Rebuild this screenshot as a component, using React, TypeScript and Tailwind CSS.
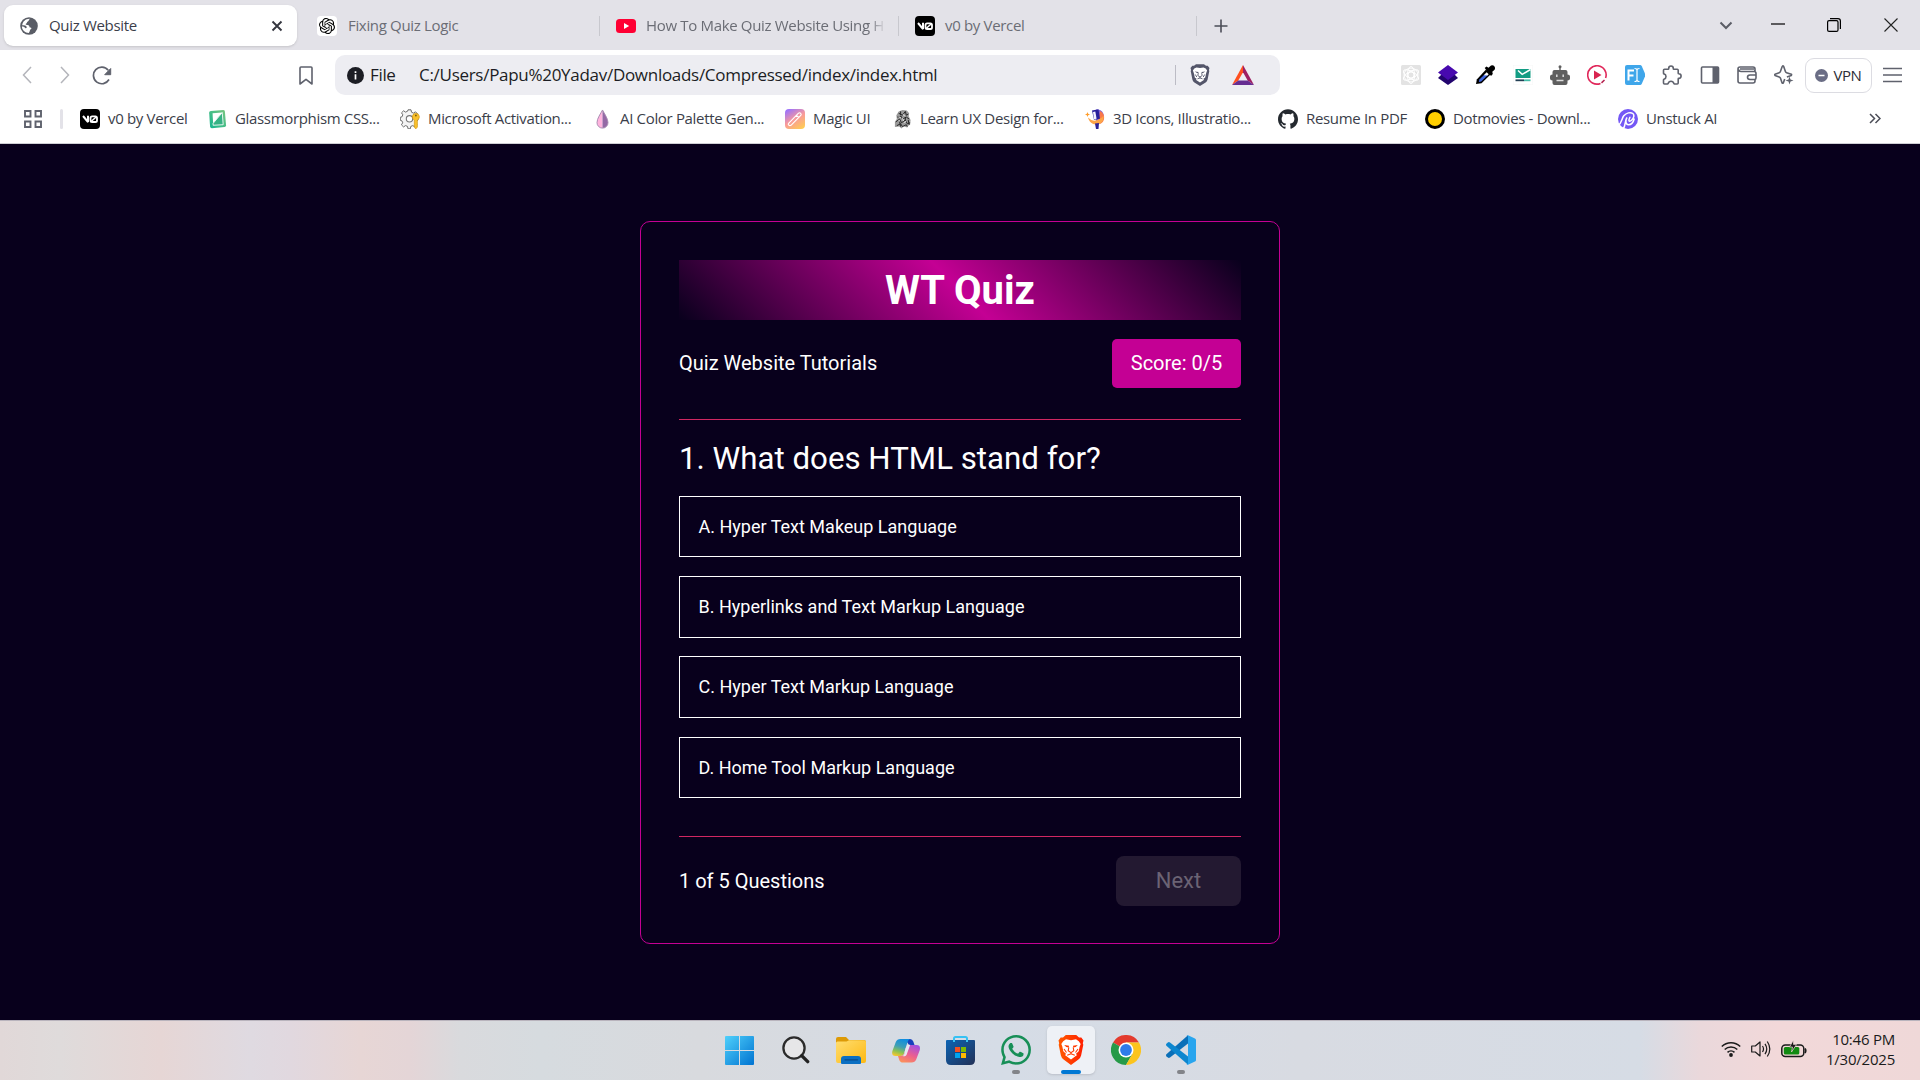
import React from "react";
import { SiOpenai, SiWhatsapp, SiGithub } from "react-icons/si";

const Globe = () => (
  <svg viewBox="0 0 18 18" className="h-[18px] w-[18px] shrink-0">
    <circle cx="9" cy="9" r="8.8" fill="#5a5d66" />
    <path d="M9.8 1.8c-1.3 1.4-.6 2-2 2.6-1.3.5-.3 1.6-1.7 2.2-.9.4-.2 1.6 1 1.5 2-.2 2.300 1 2.400 1.900.1.800 1.900.3 1.900 1.300 0 1.200-1.300.9-1.500 2.200-.2 1-.5 1.700-1.100 2.500C5 16 1.900 13 1.900 9.600c1.300 0 2.400.5 3.300 1.300.6.6 1.500.2 1.500-.5 0-1-.6-1.500-1.700-1.800-1-.3-2-.4-2.800-.3C2.600 4.600 5.800 1.600 9.800 1.800Z" fill="#fff" />
    <path d="M12.500 3.200c2 1 3.400 3.300 3.500 5.300-1.400.4-2.700-.1-3.200-1.200-.4-1 .6-1.300.2-2.200-.3-.6-1-.9-.5-1.900Z" fill="#5a5d66" />
  </svg>
);

const V0 = () => (
  <svg viewBox="0 0 20 20" className="h-5 w-5 shrink-0">
    <rect width="20" height="20" rx="4" fill="#000" />
    <path d="M3 7 8 13 V6.800" fill="none" stroke="#fff" strokeWidth="2" strokeLinejoin="bevel" />
    <rect x="10.500" y="7.400" width="6.500" height="5.600" rx="1.600" fill="none" stroke="#fff" strokeWidth="1.800" />
    <path d="m10.800 12.800 5.600-5" stroke="#fff" strokeWidth="1.500" />
  </svg>
);

const YouTube = () => (
  <svg viewBox="0 0 20 14" className="h-[14px] w-5 shrink-0">
    <rect width="20" height="14" rx="3.500" fill="#ff0033" />
    <path d="M8 4v6l5.200-3Z" fill="#fff" />
  </svg>
);

const Glass = () => (
  <svg viewBox="0 0 20 20" className="h-5 w-[19px] shrink-0">
    <defs>
      <linearGradient id="glass" x1="1" y1="0" x2="0" y2="1">
        <stop offset="0" stopColor="#7cc67f" />
        <stop offset="1" stopColor="#12b590" />
      </linearGradient>
    </defs>
    <path d="M3 1.500 16 .6q1.600 0 1.800 1.500l1.200 14.500q0 1.500-1.500 1.800L4 19.700q-1.600 0-1.800-1.500L1.200 3.400Q1.200 1.800 3 1.500Z" fill="url(#glass)" />
    <path d="M4.800 4 15 3.200 5.400 14.600Z" fill="#fff" />
    <path d="M15 3.200 16 16 5.400 16.600V14.600Z" fill="#35b184" stroke="#fff" strokeWidth=".9" />
  </svg>
);

const GearKey = () => (
  <svg viewBox="0 0 20 20" className="h-5 w-5 shrink-0">
    <path
      strokeLinejoin="round"
      d="M8 .8h3l.5 2.400 2 .9 2-1.300 2 2-1.300 2 .8 2 1 .3v2l-1.800.7-.7 2 1.300 2-2 2.100-2-1.300-2 .8-.5 2.400H8l-.5-2.400-2-.8-2 1.300-2.100-2.100 1.300-2-.8-2L.3 11.300v-3L2 7.800l.8-2-1.300-2 2.100-2 2 1.300 2-.9Z"
      fill="#f4f4f4"
      stroke="#6d6d6d"
      strokeWidth="1"
    />
    <circle cx="9.500" cy="9.800" r="3.200" fill="#fff" stroke="#777" strokeWidth="1.100" />
    <path d="M15.900 4.300a3.600 3.600 0 0 1 1.500 6.800v7l-1.600 1.800-1.500-1.800v-7a3.600 3.600 0 0 1 1.600-6.800Z" fill="#f9c02c" stroke="#c98e0a" strokeWidth=".6" />
    <circle cx="15.900" cy="6.500" r=".9" fill="#7b5a08" />
  </svg>
);

const Drop = () => (
  <svg viewBox="0 0 20 20" className="h-5 w-[19px] shrink-0">
    <path d="M10 .5C8 4.500 4.200 9.500 4.200 13.800A5.900 5.900 0 0 0 10 19.600Z" fill="#ffb3dd" />
    <path d="M10 .5c2 4 5.800 9 5.800 13.300A5.900 5.900 0 0 1 10 19.600Z" fill="#9469a5" />
    <path d="M10 .5C8 4.500 4.200 9.500 4.200 13.800a5.800 5.800 0 0 0 11.600 0C15.800 9.500 12 4.500 10 .5Z" fill="none" stroke="#a78bb0" strokeWidth="1" />
  </svg>
);

const Magic = () => (
  <svg viewBox="0 0 20 20" className="h-5 w-5 shrink-0">
    <defs>
      <linearGradient id="magic" x1="0.200" y1="0" x2="0.800" y2="1">
        <stop offset="0" stopColor="#9c72fb" />
        <stop offset=".5" stopColor="#f99a9a" />
        <stop offset="1" stopColor="#ffcb55" />
      </linearGradient>
    </defs>
    <rect width="20" height="20" rx="4" fill="url(#magic)" />
    <path d="M3.800 14.200 13.500 4.200q1.200-.9 2.200.1t.1 2.200L6 16.300q-1.200.8-2.200-.1t0-2ZM11.500 6.300l2.200 2.200" fill="none" stroke="#fff" strokeWidth="1.100" />
  </svg>
);

const Sketch = () => (
  <svg viewBox="0 0 20 20" className="h-5 w-[19px] shrink-0">
    <path d="M6 2 10 .5 14.500 1l2.500 3-.5 3 2 4-.5 5-2 1-1 2-4-1.500L9 20l-2.500-2-4.500.5L2 13l2-3-.5-4Z" fill="#9a9a9a" />
    <path d="m6 4 4 2 3-4 1 4 2-1M4.500 8l4-1 1.500 3 4-2 3 2M3 13l4-3 2 4 4-3 2 4 3-1M4 17l4-2 2 3 4-2 1 2M8 2v4M13 8v3M7 13l1 5M16 11l1 5" fill="none" stroke="#222" strokeWidth="1" />
    <path d="m6 7 2 2M11 5l1 2M6 12l1-1M12 14l2-2M10 9l1 3" stroke="#fff" strokeWidth=".9" />
  </svg>
);

const Icons3D = () => (
  <svg viewBox="0 0 20 20" className="h-5 w-5 shrink-0">
    <path d="M11 .5c6-.8 9 4.500 7.500 9.500-1 3.500-4 5.500-7.500 5Z" fill="#7c63e0" />
    <path d="M15 2c4 2 5 6 3.400 10-1 2-3 3.200-5.400 3.200Z" fill="#f9784a" />
    <path d="M3 8.500q5.500 6 13 .5 1.500-1 2.500-2.500c.8 6-3 9.200-7.500 9-4-.2-7-3-8-7Z" fill="#fda548" />
    <path d="m7 1.500 6.500-1.300 1.500 9.500-6 1Z" fill="#281f9c" />
    <path d="m8 3 2.300-.5 1.300 7.200-2.600.5Z" fill="#f4f2ff" />
    <path d="m10 14.500 4-.5-.5 6h-2.500Z" fill="#2c2396" />
    <path d="m2.500 3 .7 1.800L5 5.500l-1.800.7L2.500 8l-.7-1.800L0 5.500l1.800-.7Z" fill="#ff9d2b" />
  </svg>
);

const Dot = () => <span className="h-5 w-5 shrink-0 rounded-full border-[3px] border-black bg-[#ffcf00]" />;

const Unstuck = () => (
  <svg viewBox="0 0 20 20" className="h-5 w-5 shrink-0">
    <circle cx="10" cy="10" r="10" fill="#7457f5" />
    <path
      d="M0 16.500C4 14 3.500 9.500 5.800 6.800c2.500-3 6.700-4 9-2.300 1.900 1.500 1 4.500-1 6.500-1.500 1.500-3.200 1.700-2.800-.2.200-1.200.9-2 1-3M5 20C8 17 6.500 11.500 9 8.500c-1.800 3.300-1.300 7.300 1.500 7.300 2.700 0 5-3 5.800-6.300"
      fill="none"
      stroke="#fff"
      strokeWidth="1.500"
    />
  </svg>
);

const ShieldLion = () => (
  <svg viewBox="0 0 20 22" className="h-[22px] w-5">
    <path d="M4 1.800 6 .3h8l2 1.500 1.700-.1 1.800 2.400-.6 2 .4 1-1.700 8.400q-.4 1.800-2 3L10 22l-5.600-3.500q-1.600-1.200-2-3L.7 7.100l.4-1-.6-2 1.800-2.400Z" fill="#54566a" />
    <path d="m4.300 4.600 2.200-1.200 3.500.6 3.500-.6 2.200 1.200 1.400 2-.9 2.400-1 4.400-2 1.500 1 .8-4.200 2.800-4.200-2.800 1-.8-2-1.500-1-4.400-.9-2.400Z" fill="#fff" />
    <path d="m4.800 7.400 3.700.5-.2 1.300Q6.500 9.200 4.800 7.400ZM15.200 7.400l-3.700.5.2 1.300q1.800 0 3.500-1.800Z" fill="#54566a" />
    <path d="m8.300 9.200-.5 2.300L10 13l2.200-1.500-.5-2.300M10 13v1.300M7.500 14.800l2.500-.9 2.500.9M5.300 10.500l1.500 2.500M14.700 10.500 13.200 13" fill="none" stroke="#54566a" strokeWidth=".9" />
  </svg>
);

const Bat = () => (
  <svg viewBox="0 0 22 20" className="h-5 w-[22px]">
    <path d="M11 0v7.200L6.300 15.600 0 20Z" fill="#ff4f1f" />
    <path d="M11 0v7.200l4.700 8.400L22 20Z" fill="#9e1f63" />
    <path d="M0 20 6.300 15.600h9.400L22 20Z" fill="#662d91" />
  </svg>
);

const stroke = { fill: "none", stroke: "#5f626d", strokeWidth: 1.6 };

const extensions: React.ReactNode[] = [
  <svg key="atom" viewBox="0 0 20 20" className="h-5 w-5">
    <rect width="20" height="20" rx="1.500" fill="#e3e3e3" />
    <g fill="none" stroke="#fff" strokeWidth="1">
      <circle cx="10" cy="10" r="3" />
      <ellipse cx="10" cy="10" rx="8.500" ry="3.600" transform="rotate(30 10 10)" />
      <ellipse cx="10" cy="10" rx="8.500" ry="3.600" transform="rotate(90 10 10)" />
      <ellipse cx="10" cy="10" rx="8.500" ry="3.600" transform="rotate(150 10 10)" />
      <circle cx="10" cy="10" r="7" />
    </g>
  </svg>,
  <svg key="layers" viewBox="0 0 20 20" className="h-5 w-5">
    <path d="M0 13 4 9h12l4 4-10 7Z" fill="#22046e" />
    <path d="m10 0 10 7.500L10 15 0 7.500Z" fill="#4709ae" />
  </svg>,
  <svg key="dropper" viewBox="0 0 20 20" className="h-5 w-5">
    <path d="m1 19 .8-4.600L11 4.500l5 4.600-9.500 9.200Z" fill="#000" />
    <path d="m3.800 17 .6-2.500L9 10h4L6.200 16.600Z" fill="#4268e0" />
    <path d="m8.700 10.300 3-3 2 2-1.300 1.300Z" fill="#fff" />
    <path d="m9.700 3 1.800-1.500 2 1.300L16 .6q2-1 3.300.6t.3 3.600l-2.300 2 .5 2.300-1.800 1.800Z" fill="#000" />
  </svg>,
  <svg key="mail" viewBox="0 0 20 20" className="h-5 w-5">
    <rect x=".2" y=".2" width="19.600" height="19.600" rx="1" fill="#fff" stroke="#f0f0f0" strokeWidth=".4" />
    <path d="M2.500 4h15v9h-15Z" fill="#129c83" />
    <path d="m5 5.500 4.200 3.800L17.500 4.500" fill="none" stroke="#fff" strokeWidth="1.500" />
    <path d="M2.500 15.300H11" stroke="#223f54" strokeWidth="1.800" />
    <path d="M11 15.300h6.500" stroke="#45bca9" strokeWidth="1.800" />
  </svg>,
  <svg key="bot" viewBox="0 0 20 20" className="h-5 w-5">
    <path d="M10 2v4" stroke="#5f5f5f" strokeWidth="1.400" />
    <circle cx="10" cy="1.800" r="1.500" fill="#5f5f5f" />
    <path d="M4.500 5h11q2 0 2 2v2.500q2.500 0 2.500 2v2q0 2-2.500 2V18q0 2-2 2h-11q-2 0-2-2v-2.500Q0 15.500 0 13.500v-2q0-2 2.500-2V7q0-2 2-2Z" fill="#5f5f5f" />
    <path d="M6.800 9.500v2.500M13.200 9.500v2.500M6.500 15.500h7" stroke="#ddd" strokeWidth="1.500" />
  </svg>,
  <svg key="play" viewBox="0 0 20 20" className="h-5 w-5">
    <path d="M13.500 18.400A9.200 9.200 0 1 1 18.600 13" fill="none" stroke="#e0275a" strokeWidth="1.600" />
    <path d="m14.500 17.900 3-2.900" stroke="#b3204e" strokeWidth="1.500" />
    <path d="M7 5.500v9l7.500-4.500Z" fill="#d92450" />
  </svg>,
  <svg key="form" viewBox="0 0 20 20" className="h-5 w-5">
    <path d="M2 0h13q1.200 0 1.800 1.200L20 8.500v3l-3.200 7.300Q16.200 20 15 20H2q-2 0-2-2V2Q0 0 2 0Z" fill="#3fa6ea" />
    <path d="M3.500 15.500V5.500H9M3.500 10.500h5" fill="none" stroke="#fff" strokeWidth="2" />
    <path d="M9.500 3.500q2.500 0 2.500 1.500v10q0 1.500-2.500 1.500M14.500 3.500Q12 3.500 12 5v10q0 1.500 2.500 1.500" fill="none" stroke="#fff" strokeWidth="1.200" />
  </svg>,
  <svg key="puzzle" viewBox="0 0 20 20" className="h-5 w-5" {...stroke}>
    <path strokeLinejoin="round" d="M2.500 4.200h3.700c.4 0 .5-.3.500-.7C6.700 2 7.600 1 9 1s2.300 1 2.300 2.500c0 .4.1.7.5.7h3.400c.6 0 1 .4 1 1v3c0 .4.200.6.600.6 1.400 0 2.300.9 2.300 2.300s-.9 2.300-2.300 2.300c-.4 0-.6.200-.6.600v4c0 .6-.4 1-1 1h-2.700c-.3 0-.5-.2-.6-.5C11.500 17 10.500 16.200 9 16.200s-2.500.8-2.900 2.300c-.1.300-.3.500-.6.500h-3c-.6 0-1-.4-1-1v-3.100c0-.4.200-.6.500-.7 1.300-.3 2-1.300 2-2.700 0-1.300-.7-2.300-2-2.600-.3-.1-.5-.3-.5-.7v-3c0-.6.400-1 1-1Z" />
  </svg>,
  <svg key="panel" viewBox="0 0 20 20" className="h-5 w-5">
    <rect x="1.500" y="2" width="17" height="16" rx="1" {...stroke} />
    <path d="M12.500 2H18q1 0 1 1v14q0 1-1 1h-5.500Z" fill="#5f626d" />
  </svg>,
  <svg key="wallet" viewBox="0 0 20 20" className="h-5 w-5" {...stroke}>
    <path d="M18 6.500V4q0-2-2-2H3Q1 2 1 4v12q0 2 2 2h13q2 0 2-2v-1.500M1.500 4.500q.5 2 2.500 2h13q2 0 2 2v4.500q0 1.500-1.500 1.500h-4.500q-2.500 0-2.500-2.200T13 10h6M3 4h14" />
  </svg>,
  <svg key="leo" viewBox="0 0 20 20" className="h-5 w-5">
    <path strokeLinejoin="round" d="M8.300 1.200q.7-.7 1.300 0l1.800 5.300q.3.900 1.200 1.200l4.700 1.500q.6.500 0 1.200l-4.400 1.500M8.300 1.200 6.400 6.500q-.3.900-1.200 1.200L1 9.200q-.6.600 0 1.200l4.200 1.500q.9.300 1.200 1.200l1.700 4.800q.6.600 1.200 0l1.400-4" {...stroke} />
    <path d="m15.500 11.500 1 3 3 1-3 1-1 3-1-3-3-1 3-1Z" fill="#5f626d" />
  </svg>,
];

const tabText = "pb-[2px] text-[15px] leading-5 tracking-[-0.022em] whitespace-nowrap";

type Bookmark = { label: string; icon: React.ReactNode; width: string };
const bookmarks: Bookmark[] = [
  { label: "v0 by Vercel", icon: <V0 />, width: "w-[128px]" },
  { label: "Glassmorphism CSS...", icon: <Glass />, width: "w-[192px]" },
  { label: "Microsoft Activation...", icon: <GearKey />, width: "w-[193px]" },
  { label: "AI Color Palette Gen...", icon: <Drop />, width: "w-[192px]" },
  { label: "Magic UI", icon: <Magic />, width: "w-[108px]" },
  { label: "Learn UX Design for...", icon: <Sketch />, width: "w-[192px]" },
  { label: "3D Icons, Illustratio...", icon: <Icons3D />, width: "w-[193px]" },
  { label: "Resume In PDF", icon: <SiGithub className="h-5 w-5 shrink-0 text-[#24292f]" />, width: "w-[147px]" },
  { label: "Dotmovies - Downl...", icon: <Dot />, width: "w-[193px]" },
  { label: "Unstuck AI", icon: <Unstuck />, width: "w-[110px]" },
];

const TabStrip = () => (
  <header className="flex h-[50px] w-full items-center bg-[#e3e2e8] pt-px text-[#6b6d75]">
    <div className="ml-1 flex h-[41px] w-[293px] items-center rounded-[9px] bg-white pr-[13px] pl-4 text-[#3b3e4a] shadow-sm">
      <Globe />
      <span className={tabText + " ml-[11px] grow"}>Quiz Website</span>
      <svg viewBox="0 0 14 14" className="h-[14px] w-[14px]">
        <path d="m2.500 2.500 9 9m0-9-9 9" stroke="#34363f" strokeWidth="1.900" />
      </svg>
    </div>
    <div className="flex w-[302px] items-center pl-5">
      <span className="flex h-5 w-5 items-center justify-center rounded-[4px] bg-white">
        <SiOpenai className="h-4 w-4 text-black" />
      </span>
      <span className={tabText + " ml-[11px]"}>Fixing Quiz Logic</span>
    </div>
    <div className="flex h-5 w-[299px] items-center border-l border-[#c8c8ce] pl-4">
      <YouTube />
      <span className={tabText + " ml-[10px] w-[240px] [mask-image:linear-gradient(to_right,#000_93%,transparent)]"}>
        How To Make Quiz Website Using H
      </span>
    </div>
    <div className="flex h-5 w-[299px] items-center border-x border-[#c8c8ce] pl-4">
      <V0 />
      <span className={tabText + " ml-[10px]"}>v0 by Vercel</span>
    </div>
    <svg viewBox="0 0 14 14" className="ml-[17px] h-[14px] w-[14px]">
      <path d="M7 .5v13M.5 7h13" stroke="#4b4d57" strokeWidth="1.600" />
    </svg>
    <div className="ml-auto flex items-center pr-[22px] pb-px">
      <svg viewBox="0 0 14 14" className="mr-[38px] h-[14px] w-[14px]">
        <path d="m1.500 4.500 5.500 5.500 5.500-5.500" fill="none" stroke="#5b5d66" strokeWidth="2" />
      </svg>
      <svg viewBox="0 0 14 14" className="mr-[42px] h-[14px] w-[14px]">
        <path d="M0 6h14" stroke="#000" strokeWidth="1.200" />
      </svg>
      <svg viewBox="0 0 14 14" className="mr-[43px] h-[14px] w-[14px]">
        <rect x=".6" y="2.600" width="10.400" height="10.800" rx="1.500" fill="none" stroke="#000" strokeWidth="1.200" />
        <path d="M3 .6h8q2.400 0 2.400 2.400v8" fill="none" stroke="#000" strokeWidth="1.200" />
      </svg>
      <svg viewBox="0 0 14 14" className="h-[14px] w-[14px]">
        <path d="m.5.5 13 13m0-13-13 13" stroke="#222" strokeWidth="1.100" />
      </svg>
    </div>
  </header>
);

const Toolbar = () => (
  <div className="flex h-[50px] items-center bg-white">
    <svg viewBox="0 0 10 18" className="ml-[22px] h-[18px] w-[10px]">
      <path d="M9 1 1.500 9 9 17" fill="none" stroke="#b4b5bb" strokeWidth="1.500" />
    </svg>
    <svg viewBox="0 0 10 18" className="ml-[28px] h-[18px] w-[10px]">
      <path d="m1 1 7.500 8L1 17" fill="none" stroke="#b4b5bb" strokeWidth="1.500" />
    </svg>
    <svg viewBox="0 0 20 20" className="ml-[22px] h-5 w-5">
      <path d="M16.200 5.200A8.300 8.300 0 1 0 17 14.500" fill="none" stroke="#5f626d" strokeWidth="1.700" />
      <path d="M18.700 3.500v6.200h-6Z" fill="#5f626d" stroke="#5f626d" strokeLinejoin="round" />
    </svg>
    <svg viewBox="0 0 14 19" className="ml-[187px] h-[19px] w-[14px]">
      <path strokeLinejoin="round" d="M1 2q0-1 1-1h10q1 0 1 1v16l-6-4.700L1 18Z" {...stroke} />
    </svg>
    <div className="ml-[22px] flex h-10 w-[945px] items-center rounded-[10px] bg-[#ededf2] pl-3 text-[17px] whitespace-nowrap text-[#1c1d24]">
      <svg viewBox="0 0 17 17" className="h-[17px] w-[17px]">
        <circle cx="8.500" cy="8.500" r="8.500" fill="#1c1d24" />
        <path d="M8.500 7.300v5.200M8.500 4.200v1.700" stroke="#fff" strokeWidth="1.700" />
      </svg>
      <span className="ml-[6px] w-[49px] tracking-[-0.02em]">File</span>
      <span className="grow tracking-[-0.017em]">C:/Users/Papu%20Yadav/Downloads/Compressed/index/index.html</span>
      <span className="mr-[14px] h-5 w-px bg-[#bcbcc5]" />
      <ShieldLion />
      <span className="mr-[26px] ml-[22px]"><Bat /></span>
    </div>
    <div className="ml-[120.5px] flex items-center gap-[17.4px]">{extensions}</div>
    <div className="ml-[10.5px] flex h-[35px] w-[67px] items-center justify-center gap-[5px] rounded-[9px] border border-[#dcdce2] text-[15px] tracking-[-0.03em] text-[#2b2d36]">
      <svg viewBox="0 0 13 13" className="h-[13px] w-[13px]">
        <circle cx="6.500" cy="6.500" r="6.500" fill="#6a6d85" />
        <path d="M3.500 6.500h6" stroke="#fff" strokeWidth="1.500" />
      </svg>
      VPN
    </div>
    <svg viewBox="0 0 19 16" className="ml-[11px] h-4 w-[19px]">
      <path d="M0 1.500h19M0 8h19M0 14.500h19" stroke="#5f626d" strokeWidth="1.500" />
    </svg>
  </div>
);

const BookmarksBar = () => (
  <div className="flex h-[44px] items-center border-b border-[#cfcfd4] bg-white pb-[6px] text-[#3b3e4a]">
    <svg viewBox="0 0 18 18" className="ml-[24px] h-[18px] w-[18px]">
      <path d="M1 1h5.500v5.500H1ZM11.500 1H17v5.500h-5.500ZM1 11.500h5.500V17H1ZM11.500 11.500H17V17h-5.500Z" fill="none" stroke="#5f626d" strokeWidth="1.900" />
    </svg>
    <span className="mr-[17px] ml-[18px] h-5 w-[3px] rounded bg-[#e3e2e8]" />
    {bookmarks.map((b) => (
      <div key={b.label} className={"flex shrink-0 items-center gap-2 " + b.width}>
        {b.icon}
        <span className={tabText}>{b.label}</span>
      </div>
    ))}
    <svg viewBox="0 0 12 11" className="mr-[39px] ml-auto h-[11px] w-3">
      <path d="m1 1 4.500 4.500L1 10m5.500-9L11 5.500 6.500 10" fill="none" stroke="#4b4d57" strokeWidth="1.500" />
    </svg>
  </div>
);

const options = [
  "A. Hyper Text Makeup Language",
  "B. Hyperlinks and Text Markup Language",
  "C. Hyper Text Markup Language",
  "D. Home Tool Markup Language",
];

const QuizCard = () => (
  <section className="mt-[77px] flex h-[723px] w-[640px] flex-col rounded-[10px] border border-[#c40094] px-[38px] pt-[38px] font-['Roboto',sans-serif] text-white">
    <h1 className="flex h-[60px] items-center justify-center bg-[linear-gradient(45deg,transparent,#c40094,transparent)] pt-[2px] text-[40px] leading-none font-bold">
      WT Quiz
    </h1>
    <div className="mt-[19px] flex h-[49px] items-center justify-between text-[20px]">
      <span className="pb-px">Quiz Website Tutorials</span>
      <span className="flex h-full w-[129px] items-center justify-center rounded-[5px] bg-[#c40094] pb-px">Score: 0/5</span>
    </div>
    <div className="mt-[31px] h-px bg-[#d02762]" />
    <h2 className="mt-[19px] flex h-[38px] items-center pt-[2px] text-[31.250px] leading-none font-normal">1. What does HTML stand for?</h2>
    <ul className="mt-[19px] flex flex-col gap-[18.8px]">
      {options.map((o) => (
        <li key={o} className="flex h-[61.400px] items-center border border-white pb-[0.5px] pl-[18.5px] text-[18px]">
          {o}
        </li>
      ))}
    </ul>
    <div className="mt-[38px] h-px bg-[#d02762]" />
    <div className="mt-[19px] flex h-[50px] items-center justify-between text-[20px]">
      <span>1 of 5 Questions</span>
      <button className="h-full w-[125px] rounded-[8px] bg-[#231931] pb-px text-[22px] text-[#6b6374]">Next</button>
    </div>
  </section>
);

const Windows = () => (
  <svg viewBox="0 0 29 29" className="h-[29px] w-[29px]">
    <defs>
      <linearGradient id="win" gradientUnits="userSpaceOnUse" x1="0" y1="0" x2="29" y2="29">
        <stop offset="0" stopColor="#4fd0fb" />
        <stop offset="1" stopColor="#0073d1" />
      </linearGradient>
    </defs>
    <path d="M1 0h13v14H0V1Q0 0 1 0ZM15 0h13q1 0 1 1v13H15ZM0 15h14v14H1q-1 0-1-1ZM15 15h14v13q0 1-1 1H15Z" fill="url(#win)" />
  </svg>
);

const Search = () => (
  <svg viewBox="0 0 28 28" className="ml-[2px] h-7 w-7">
    <circle cx="12" cy="12" r="10.600" fill="#e6e6e8" stroke="#2b2b2b" strokeWidth="2.300" />
    <path d="m19.700 19.700 6 6" stroke="#222" strokeWidth="3.300" strokeLinecap="round" />
  </svg>
);

const Explorer = () => (
  <svg viewBox="0 0 30 27" className="h-[27px] w-[30px]">
    <defs>
      <linearGradient id="folder" x1="0" y1="0" x2="1" y2="1">
        <stop offset="0" stopColor="#ffdd70" />
        <stop offset="1" stopColor="#fdb913" />
      </linearGradient>
    </defs>
    <path d="M0 2q0-2 2-2h8l3 3h15q2 0 2 2v4H0Z" fill="#dd9a06" />
    <path d="M0 6q0-1.500 1.500-1.500h9L13 3.300h15q2 0 2 1.700v19q0 2-2 2H2q-2 0-2-2Z" fill="url(#folder)" />
    <path d="M5 26v-4q0-3 3-3h14q3 0 3 3v4q0 1-1 1H6q-1 0-1-1Z" fill="#0b6fc2" />
    <path d="M9 22.800h12.500" stroke="#084b8a" strokeWidth="1.200" strokeLinecap="round" />
  </svg>
);

const Copilot = () => (
  <svg viewBox="0 0 28 25" className="h-[25px] w-7">
    <defs>
      <linearGradient id="cpa" x1="0.600" y1="0" x2="0.300" y2="1">
        <stop offset="0" stopColor="#0f8de0" />
        <stop offset=".45" stopColor="#3f9fb5" />
        <stop offset=".75" stopColor="#8cc152" />
        <stop offset="1" stopColor="#f2c62f" />
      </linearGradient>
      <linearGradient id="cpb" x1="0.800" y1="0" x2="0.300" y2="1">
        <stop offset="0" stopColor="#a04fe3" />
        <stop offset=".55" stopColor="#ec5f8f" />
        <stop offset="1" stopColor="#fb8f5c" />
      </linearGradient>
    </defs>
    <path d="M13 1h5q2.500 0 3.300 2.500L22.500 7H17Z" fill="#173fbd" />
    <path d="M8.500 1H18q-1.800.8-2.600 3.500L12.200 15q-1 3-4 3H3.500Q-.8 18 .4 13L3.800 4Q5 1 8.500 1Z" fill="url(#cpa)" />
    <path d="M19.500 24.500H11q-3 0-3.800-2.800L6 18h2.500q3 0 4-3l2.500-8h9.500q4.300 0 3.300 5l-3.600 9.500q-1.200 3-4.700 3Z" fill="url(#cpb)" />
    <path d="m13.300 11 1.200-3q.5-1.200 1.700-1.200h2l-3.600 10q-.6 1.400-2 1.400h-2q1.200-.6 1.700-2.200Z" fill="#e8e6f0" />
  </svg>
);

const Store = () => (
  <svg viewBox="0 0 29 29" className="h-[29px] w-[29px]">
    <defs>
      <linearGradient id="store" x1="0" y1="0" x2="1" y2="1">
        <stop offset="0" stopColor="#0c64b4" />
        <stop offset="1" stopColor="#223056" />
      </linearGradient>
    </defs>
    <path d="M0 5q0-1 1-1h27q1 0 1 1v19q0 5-5 5H5q-5 0-5-5Z" fill="url(#store)" />
    <path d="M8 6V2.500Q8 1 9.500 1h10Q21 1 21 2.500V6" fill="none" stroke="#36c1f3" strokeWidth="2" />
    <path d="M9 11h5v5H9Z" fill="#f25022" />
    <path d="M15 11h5v5h-5Z" fill="#7fba00" />
    <path d="M9 17h5v5H9Z" fill="#00a4ef" />
    <path d="M15 17h5v5h-5Z" fill="#ffb900" />
  </svg>
);

const BraveLion = () => (
  <svg viewBox="0 0 26 30" className="h-[30px] w-[26px]">
    <defs>
      <linearGradient id="brave" x1="0" x2="1">
        <stop offset="0" stopColor="#ff5a00" />
        <stop offset="1" stopColor="#ff1f00" />
      </linearGradient>
    </defs>
    <path d="M5 2.600 7.800 0h10.400L21 2.600l2.300-.1L25.500 5.500l-.7 2.700.5 1.500-2.200 10.800q-.6 2.500-2.700 4L13 30l-7.400-5.500q-2.100-1.500-2.700-4L.7 9.700l.5-1.500-.7-2.700 2.200-3Z" fill="url(#brave)" />
    <path d="m5.200 6.300 2.800-2 5 .9 5-.9 2.800 2 1.900 2.600-1 2.600-1 4.800-2.900 2.600 1.300 1.200L13 24.500l-6.100-4.400 1.300-1.200-2.900-2.600-1-4.800-1-2.600Z" fill="#fff" />
    <path d="m6.200 10 4.800.7-.3 1.800Q8 12.500 6.200 10ZM19.800 10l-4.800.7.300 1.800q2.700 0 4.500-2.500Z" fill="#ff3a00" />
    <path d="m10.800 12.300-.6 3.400 2.800 1.900 2.800-1.900-.6-3.400M13 17.600v1.600M9.200 20.200 13 18.800l3.800 1.400M6 14l2.500 3.500M20 14l-2.500 3.500" fill="none" stroke="#ff3a00" strokeWidth="1.100" />
  </svg>
);

const Chrome = () => (
  <svg viewBox="0 0 30 30" className="h-[30px] w-[30px]">
    <path d="M15 15 2 7.500A15 15 0 0 1 28 7.500H15Z" fill="#e33b2e" />
    <path d="M15 15 2 7.500A15 15 0 0 0 15 30l6.500-11.300Z" fill="#269a48" />
    <path d="M15 7.500h13A15 15 0 0 1 15 30l6.500-11.200Z" fill="#fcc41d" />
    <circle cx="15" cy="15" r="7.500" fill="#fff" />
    <circle cx="15" cy="15" r="5.900" fill="#2f7bea" />
  </svg>
);

const VSCode = () => (
  <svg viewBox="0 0 30 30" className="h-[30px] w-[30px]">
    <path d="m22 8.500-18 14q-1.200.8-2.200 0L.4 21.200q-.8-1 0-2L22 .2Z" fill="#0a6fb8" />
    <path d="m22 21.500-18-14q-1.200-.8-2.200 0L.4 8.800q-.8 1 0 2L22 29.800Z" fill="#0c86cf" />
    <path d="M22 .2 29 3.400q1 .5 1 1.600v20q0 1.100-1 1.600l-7 3.200q-1 .2-1.500-.6Q22 29.500 22 28V2q0-1.500-1.500-1.200.5-.8 1.500-.6Z" fill="#28a5ee" />
  </svg>
);

const taskItems: { icon: React.ReactNode; width: string; running?: boolean; active?: boolean }[] = [
  { icon: <Windows />, width: "w-[56px]" },
  { icon: <Search />, width: "w-[56px]" },
  { icon: <Explorer />, width: "w-[55px]" },
  { icon: <Copilot />, width: "w-[55px]" },
  { icon: <Store />, width: "w-[55px]" },
  { icon: <SiWhatsapp className="h-[30px] w-[30px] text-[#178f57]" />, width: "w-[55px]", running: true },
  { icon: <BraveLion />, width: "w-[55px]", active: true },
  { icon: <Chrome />, width: "w-[55px]" },
  { icon: <VSCode />, width: "w-[55px]", running: true },
];

const Taskbar = () => (
  <footer className="flex h-[60px] items-center border-t border-[#b9b4bd] bg-[linear-gradient(to_right,#e1d8d8_0px,#dfdbdb_60px,#e6d6d5_160px,#dfdae1_250px,#e1d8df_290px,#e7d6d5_360px,#e4d5d7_410px,#d9dadd_460px,#d6dbdf_540px,#d8dade_700px,#d5dce6_1000px,#d8dbe2_1300px,#d6dce5_1640px,#ead8db_1700px,#f2d8d9_1780px,#efd8d8_1920px)] pb-px">
    <div className="ml-[711px] flex">
      {taskItems.map((t, i) => (
        <div key={i} className={"flex justify-center " + t.width}>
          <div className={"relative flex h-12 w-12 items-center justify-center rounded-[5px] " + (t.active ? "bg-[#eef1f6] shadow-sm" : "")}>
            {t.icon}
            {t.active && <span className="absolute bottom-0 h-1 w-5 rounded-full bg-[#0078d4]" />}
            {t.running && <span className="absolute bottom-0 h-1 w-2 rounded-full bg-[#828489]" />}
          </div>
        </div>
      ))}
    </div>
    <div className="ml-auto flex items-center pr-[25px] pb-[2px] text-[#1b1b1b]">
      <svg viewBox="0 0 20 16" className="mr-[10px] h-4 w-5">
        <path d="M.8 5.500a13 13 0 0 1 18.400 0M3.700 8.500a9 9 0 0 1 12.600 0M6.500 11.400a5 5 0 0 1 7 0" fill="none" stroke="#1b1b1b" strokeWidth="1.500" />
        <circle cx="10" cy="14" r="1.900" fill="#1b1b1b" />
      </svg>
      <svg viewBox="0 0 20 18" className="mr-[10px] h-[18px] w-5">
        <path strokeLinejoin="round" d="M.7 6h3.600L9 2v14l-4.700-4H.7ZM11.500 6q2 3 0 6M14 3.800q3.500 5.200 0 10.400M16.300 1.500q5 7.500 0 15" fill="none" stroke="#1b1b1b" strokeWidth="1.200" />
      </svg>
      <svg viewBox="0 0 26 18" className="mb-px h-[18px] w-[26px]">
        <rect x=".8" y="5" width="22" height="11.500" rx="3.500" fill="none" stroke="#1b1b1b" strokeWidth="1.500" />
        <path d="M24 8.500q1.500 2.200 0 4.500" stroke="#1b1b1b" strokeWidth="1.700" fill="none" />
        <rect x="2.800" y="7" width="15.500" height="7.500" rx="1.500" fill="#118a11" />
        <path d="M12.500 0 8.500 7h3l-1 5 5-7.500h-3Z" fill="#1b1b1b" stroke="#f2d8d9" strokeWidth=".7" />
      </svg>
      <div className="ml-[17px] w-[71px] pb-px text-right text-[15px] leading-5 tracking-[-0.015em] whitespace-nowrap">
        <div>10:46 PM</div>
        <div>1/30/2025</div>
      </div>
    </div>
  </footer>
);

export default function App() {
  return (
    <div className="flex h-[1080px] w-[1920px] flex-col overflow-hidden bg-white font-['Open_Sans',sans-serif]">
      <TabStrip />
      <Toolbar />
      <BookmarksBar />
      <main className="flex grow flex-col items-center bg-[#08001c]">
        <QuizCard />
      </main>
      <Taskbar />
    </div>
  );
}
